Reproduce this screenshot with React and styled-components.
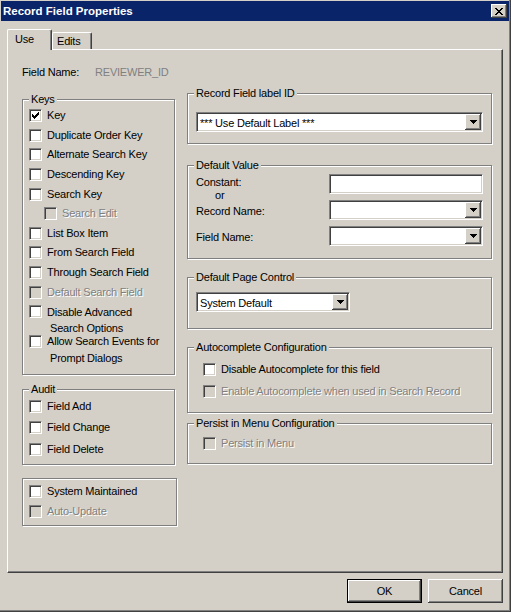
import React from 'react'
import styled, { createGlobalStyle } from 'styled-components'

const face = '#d4d0c8'
const shadow = '#808080'
const darkShadow = '#404040'
const hilite = '#ffffff'

const GlobalStyle = createGlobalStyle`
  html, body {
    margin: 0;
    padding: 0;
    background: ${face};
  }
  body {
    font-family: "Liberation Sans", Arial, sans-serif;
    font-size: 11px;
    letter-spacing: -0.2px;
    color: #000;
  }
  * {
    box-sizing: border-box;
  }
`

const Window = styled.div`
  width: 511px;
  height: 612px;
  display: flex;
  flex-direction: column;
  background: ${face};
  padding: 1px 2px 2px 1px;
  box-shadow: inset -1px -1px 0 ${darkShadow}, inset -2px -2px 0 ${shadow};
`

const TitleBar = styled.div`
  height: 20px;
  display: flex;
  align-items: center;
  justify-content: space-between;
  padding: 0 2px 0 2px;
  background: #0a246a;
  color: #fff;
  font-weight: bold;
  font-size: 11.5px;
  letter-spacing: 0;
`

const CaptionButton = styled.div`
  width: 16px;
  height: 14px;
  display: flex;
  align-items: center;
  justify-content: center;
  background: ${face};
  box-shadow: inset -1px -1px 0 ${darkShadow}, inset 1px 1px 0 ${hilite},
    inset -2px -2px 0 ${shadow};
`

const Body = styled.div`
  flex: 1;
  display: flex;
  flex-direction: column;
  padding: 8px 6px 0 6px;
`

const TabRow = styled.div`
  display: flex;
  align-items: flex-end;
  height: 21px;
  margin-bottom: -1px;
`

const Tab = styled.div`
  position: ${p => (p.$active ? 'relative' : 'static')};
  z-index: ${p => (p.$active ? 2 : 0)};
  width: ${p => p.$w}px;
  height: ${p => (p.$active ? 21 : 18)}px;
  padding-left: ${p => p.$pl}px;
  padding-top: ${p => (p.$active ? 3 : 2)}px;
  line-height: 13px;
  background: ${face};
  border-top: 1px solid ${hilite};
  border-left: 1px solid ${hilite};
  border-right: 1px solid ${darkShadow};
  box-shadow: inset -1px 0 0 ${shadow};
  border-top-left-radius: 2px;
  border-top-right-radius: 2px;
`

const Panel = styled.div`
  position: relative;
  z-index: 1;
  height: 524px;
  padding: 16px 0 0 14px;
  border-top: 1px solid ${hilite};
  border-left: 1px solid ${hilite};
  border-right: 1px solid ${darkShadow};
  border-bottom: 1px solid ${darkShadow};
  box-shadow: inset -1px -1px 0 ${shadow};
`

const FieldNameRow = styled.div`
  display: flex;
  line-height: 13px;
`

const FieldLabel = styled.span`
  width: 73px;
`

const FieldValue = styled.span`
  color: ${shadow};
`

const Columns = styled.div`
  display: flex;
  gap: 10px;
  margin-top: 8px;
`

const Column = styled.div`
  display: flex;
  flex-direction: column;
  width: ${p => p.$w}px;
  padding-top: ${p => p.$pt || 0}px;
`

const Group = styled.fieldset`
  margin: ${p => p.$mt || 0}px 0 0 0;
  padding: 0;
  min-width: 0;
  width: ${p => (p.$w ? `${p.$w}px` : 'auto')};
  height: ${p => p.$h}px;
  border: 1px solid ${shadow};
  box-shadow: inset 1px 1px 0 ${hilite}, 1px 1px 0 ${hilite};
`

const Legend = styled.legend`
  margin-left: 6px;
  padding: 0 2px;
  line-height: 13px;
  background: ${face};
`

const GroupBody = styled.div`
  padding: ${p => p.$pad};
`

const CheckRow = styled.div`
  display: flex;
  align-items: ${p => (p.$multi ? 'flex-start' : 'center')};
  height: ${p => (p.$h ? `${p.$h}px` : 'auto')};
  margin-top: ${p => p.$mt || 0}px;
  padding-top: ${p => p.$pt || 0}px;
  padding-left: ${p => p.$indent || 0}px;
  gap: 5px;
  line-height: ${p => p.$lh || 13}px;
  color: ${p => (p.$disabled ? shadow : '#000')};
  text-shadow: ${p => (p.$disabled ? `1px 1px 0 ${hilite}` : 'none')};
  white-space: nowrap;
`

const Box = styled.span`
  flex: none;
  width: 13px;
  height: 13px;
  margin-top: ${p => p.$mt || 0}px;
  display: flex;
  align-items: center;
  justify-content: center;
  background: ${p => (p.$disabled ? face : '#fff')};
  border: 1px solid;
  border-color: ${shadow} ${hilite} ${hilite} ${shadow};
  box-shadow: inset 1px 1px 0 ${darkShadow}, inset -1px -1px 0 ${face};
`

const Indent = styled.span`
  padding-left: 3px;
`

const FormGrid = styled.div`
  display: grid;
  grid-template-columns: 1fr 154px;
  grid-template-rows: repeat(3, 20px);
  row-gap: 6px;
  padding: 2px 8px 0 8px;
`

const FormLabel = styled.div`
  align-self: ${p => (p.$top ? 'start' : 'center')};
  line-height: 13px;
  padding-top: 2px;
`

const Or = styled.div`
  padding-left: 19px;
`

const Sunken = styled.div`
  display: flex;
  align-items: center;
  height: 20px;
  width: ${p => (p.$w ? `${p.$w}px` : '100%')};
  padding: 1px;
  background: #fff;
  border: 1px solid;
  border-color: ${shadow} ${hilite} ${hilite} ${shadow};
  box-shadow: inset 1px 1px 0 ${darkShadow}, inset -1px -1px 0 ${face};
`

const ComboText = styled.span`
  flex: 1;
  padding-left: 2px;
  padding-top: 1px;
  white-space: nowrap;
  overflow: hidden;
`

const DropButton = styled.span`
  flex: none;
  width: 16px;
  height: 16px;
  display: flex;
  align-items: center;
  justify-content: center;
  background: ${face};
  box-shadow: inset -1px -1px 0 ${darkShadow}, inset 1px 1px 0 ${hilite},
    inset -2px -2px 0 ${shadow};
`

const Footer = styled.div`
  display: flex;
  justify-content: flex-end;
  gap: 6px;
  margin-top: 6px;
`

const PushButton = styled.button`
  width: 75px;
  height: 24px;
  padding: 0;
  font: inherit;
  letter-spacing: inherit;
  color: #000;
  background: ${face};
  border: ${p => (p.$default ? '1px solid #000' : 'none')};
  box-shadow: inset -1px -1px 0 ${darkShadow}, inset 1px 1px 0 ${hilite},
    inset -2px -2px 0 ${shadow};
`

const CloseGlyph = () => (
  <svg width="8" height="7" viewBox="0 0 8 7" shapeRendering="crispEdges">
    <path
      d="M0 0h2v1H0zM6 0h2v1H6zM1 1h2v1H1zM5 1h2v1H5zM2 2h4v1H2zM3 3h2v1H3zM2 4h4v1H2zM1 5h2v1H1zM5 5h2v1H5zM0 6h2v1H0zM6 6h2v1H6z"
      fill="#000"
    />
  </svg>
)

const ArrowGlyph = () => (
  <svg width="7" height="4" viewBox="0 0 7 4" shapeRendering="crispEdges">
    <path d="M0 0h7v1H0zM1 1h5v1H1zM2 2h3v1H2zM3 3h1v1H3z" fill="#000" />
  </svg>
)

const Tick = () => (
  <svg width="7" height="7" viewBox="0 0 7 7" shapeRendering="crispEdges">
    <path
      d="M6 0h1v1H6zM5 1h2v1H5zM0 2h1v1H0zM4 2h3v1H4zM0 3h2v1H0zM3 3h3v1H3zM0 4h5v1H0zM1 5h3v1H1zM2 6h1v1H2z"
      fill="#000"
    />
  </svg>
)

const Check = ({ label, second, checked, disabled, h, indent, multi, lh, mt, pt, boxMt }) => (
  <CheckRow
    $h={h}
    $indent={indent}
    $disabled={disabled}
    $multi={multi}
    $lh={lh}
    $mt={mt}
    $pt={pt}
  >
    <Box $disabled={disabled} $mt={boxMt}>
      {checked && <Tick />}
    </Box>
    <span>
      {label}
      {second && (
        <>
          <br />
          <Indent>{second}</Indent>
        </>
      )}
    </span>
  </CheckRow>
)

const Combo = ({ value, w }) => (
  <Sunken $w={w}>
    <ComboText>{value}</ComboText>
    <DropButton>
      <ArrowGlyph />
    </DropButton>
  </Sunken>
)

const keys = [
  { label: 'Key', checked: true },
  { label: 'Duplicate Order Key' },
  { label: 'Alternate Search Key' },
  { label: 'Descending Key' },
  { label: 'Search Key' },
  { label: 'Search Edit', disabled: true, indent: 15 },
  { label: 'List Box Item' },
  { label: 'From Search Field' },
  { label: 'Through Search Field' },
  { label: 'Default Search Field', disabled: true },
]

export default function App() {
  return (
    <>
      <GlobalStyle />
      <Window>
        <TitleBar>
          <span>Record Field Properties</span>
          <CaptionButton>
            <CloseGlyph />
          </CaptionButton>
        </TitleBar>
        <Body>
          <TabRow>
            <Tab $active $w={45} $pl={7}>
              Use
            </Tab>
            <Tab $w={40} $pl={4}>
              Edits
            </Tab>
          </TabRow>
          <Panel>
            <FieldNameRow>
              <FieldLabel>Field Name:</FieldLabel>
              <FieldValue>REVIEWER_ID</FieldValue>
            </FieldNameRow>
            <Columns>
              <Column $w={155} $pt={6}>
                <Group $w={153} $h={282}>
                  <Legend>Keys</Legend>
                  <GroupBody $pad="0 0 0 6px">
                    {keys.map(k => (
                      <Check key={k.label} {...k} h={19.6} />
                    ))}
                    <Check
                      label="Disable Advanced"
                      second="Search Options"
                      multi
                      lh={16}
                      pt={2}
                      boxMt={1.5}
                    />
                    <Check
                      label="Allow Search Events for"
                      second="Prompt Dialogs"
                      multi
                      lh={17}
                      mt={-3}
                      boxMt={2}
                    />
                  </GroupBody>
                </Group>
                <Group $w={153} $h={82} $mt={8}>
                  <Legend>Audit</Legend>
                  <GroupBody $pad="0 0 0 6px">
                    <Check label="Field Add" h={20} />
                    <Check label="Field Change" h={22} />
                    <Check label="Field Delete" h={22} />
                  </GroupBody>
                </Group>
                <Group $w={155} $h={48} $mt={13}>
                  <GroupBody $pad="2px 0 0 6px">
                    <Check label="System Maintained" h={20} />
                    <Check label="Auto-Update" h={20} disabled />
                  </GroupBody>
                </Group>
              </Column>
              <Column $w={305}>
                <Group $h={57}>
                  <Legend>Record Field label ID</Legend>
                  <GroupBody $pad="12px 8px 0 8px">
                    <Combo value="*** Use Default Label ***" />
                  </GroupBody>
                </Group>
                <Group $h={100} $mt={15}>
                  <Legend>Default Value</Legend>
                  <FormGrid>
                    <FormLabel $top>
                      Constant:
                      <Or>or</Or>
                    </FormLabel>
                    <Sunken />
                    <FormLabel>Record Name:</FormLabel>
                    <Combo />
                    <FormLabel>Field Name:</FormLabel>
                    <Combo />
                  </FormGrid>
                </Group>
                <Group $h={58} $mt={12}>
                  <Legend>Default Page Control</Legend>
                  <GroupBody $pad="8px 8px 0 8px">
                    <Combo value="System Default" w={154} />
                  </GroupBody>
                </Group>
                <Group $h={72} $mt={12}>
                  <Legend>Autocomplete Configuration</Legend>
                  <GroupBody $pad="4px 0 0 15px">
                    <Check label="Disable Autocomplete for this field" h={22} />
                    <Check
                      label="Enable Autocomplete when used in Search Record"
                      h={22}
                      disabled
                    />
                  </GroupBody>
                </Group>
                <Group $h={47} $mt={4}>
                  <Legend>Persist in Menu Configuration</Legend>
                  <GroupBody $pad="2px 0 0 15px">
                    <Check label="Persist in Menu" h={22} disabled />
                  </GroupBody>
                </Group>
              </Column>
            </Columns>
          </Panel>
          <Footer>
            <PushButton $default>OK</PushButton>
            <PushButton>Cancel</PushButton>
          </Footer>
        </Body>
      </Window>
    </>
  )
}
